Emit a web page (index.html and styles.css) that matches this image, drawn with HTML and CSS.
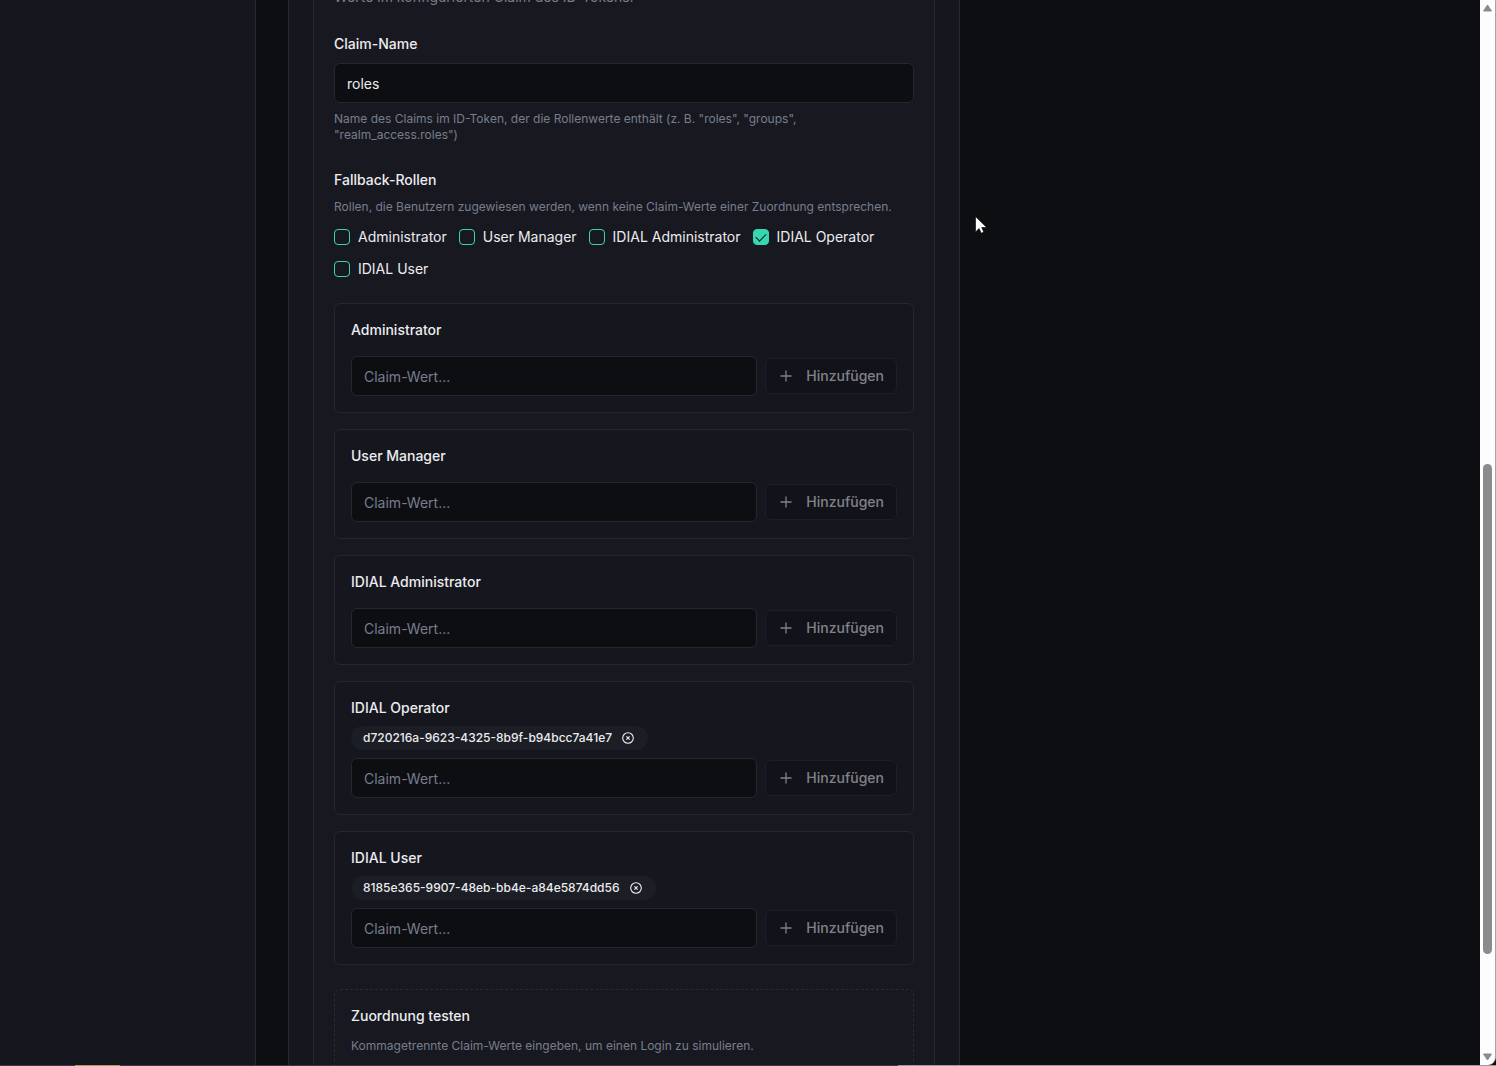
FILE: index.html
```html
<!DOCTYPE html>
<html lang="de">
<head>
<meta charset="UTF-8">
<meta name="viewport" content="width=device-width, initial-scale=1.0">
<title>Rollenzuordnung</title>
<link rel="stylesheet" href="styles.css">
</head>
<body>

<!-- shared icons -->
<svg class="sprite" aria-hidden="true">
<symbol id="plus" viewBox="0 0 16 16"><path d="M8 2.5v11M2.5 8h11" fill="none" stroke="currentColor" stroke-width="1.3"/></symbol>
<symbol id="remove" viewBox="0 0 12 12"><circle cx="6" cy="6" r="5.3" fill="none" stroke="currentColor" stroke-width="1.1"/><path d="M4.4 4.4l3.2 3.2M7.6 4.4L4.4 7.6" fill="none" stroke="currentColor" stroke-width="1.2"/></symbol>
</svg>

<div class="window">
<aside class="sidebar"></aside>

<main class="content">
<div class="card">
<section class="panel">
<p class="intro">Werte im konfigurierten Claim des ID-Tokens.</p>

<div class="field">
<label class="label" for="claimName">Claim-Name</label>
<input class="text-input" type="text" id="claimName" value="roles">
<p class="hint">Name des Claims im ID-Token, der die Rollenwerte enthält (z. B. "roles", "groups", "realm_access.roles")</p>
</div>

<fieldset class="fallback">
<legend class="label">Fallback-Rollen</legend>
<p class="hint">Rollen, die Benutzern zugewiesen werden, wenn keine Claim-Werte einer Zuordnung entsprechen.</p>
<div class="checks">
<label class="check"><input type="checkbox">Administrator</label>
<label class="check"><input type="checkbox">User Manager</label>
<label class="check"><input type="checkbox">IDIAL Administrator</label>
<label class="check"><input type="checkbox" checked>IDIAL Operator</label>
<label class="check"><input type="checkbox">IDIAL User</label>
</div>
</fieldset>

<div class="roles">
<div class="role">
<label class="role-title" for="roleAdmin">Administrator</label>
<div class="chips"></div>
<div class="add-row">
<input class="text-input" type="text" id="roleAdmin" placeholder="Claim-Wert...">
<button class="add" type="button" disabled><svg class="icon"><use href="#plus"/></svg>Hinzufügen</button>
</div>
</div>

<div class="role">
<label class="role-title" for="roleManager">User Manager</label>
<div class="chips"></div>
<div class="add-row">
<input class="text-input" type="text" id="roleManager" placeholder="Claim-Wert...">
<button class="add" type="button" disabled><svg class="icon"><use href="#plus"/></svg>Hinzufügen</button>
</div>
</div>

<div class="role">
<label class="role-title" for="roleIdialAdmin">IDIAL Administrator</label>
<div class="chips"></div>
<div class="add-row">
<input class="text-input" type="text" id="roleIdialAdmin" placeholder="Claim-Wert...">
<button class="add" type="button" disabled><svg class="icon"><use href="#plus"/></svg>Hinzufügen</button>
</div>
</div>

<div class="role">
<label class="role-title" for="roleOperator">IDIAL Operator</label>
<div class="chips">
<span class="chip">d720216a-9623-4325-8b9f-b94bcc7a41e7<button class="remove" type="button" aria-label="Entfernen"><svg><use href="#remove"/></svg></button></span>
</div>
<div class="add-row">
<input class="text-input" type="text" id="roleOperator" placeholder="Claim-Wert...">
<button class="add" type="button" disabled><svg class="icon"><use href="#plus"/></svg>Hinzufügen</button>
</div>
</div>

<div class="role">
<label class="role-title" for="roleUser">IDIAL User</label>
<div class="chips">
<span class="chip">8185e365-9907-48eb-bb4e-a84e5874dd56<button class="remove" type="button" aria-label="Entfernen"><svg><use href="#remove"/></svg></button></span>
</div>
<div class="add-row">
<input class="text-input" type="text" id="roleUser" placeholder="Claim-Wert...">
<button class="add" type="button" disabled><svg class="icon"><use href="#plus"/></svg>Hinzufügen</button>
</div>
</div>
</div>

<div class="test-box">
<h3 class="role-title">Zuordnung testen</h3>
<p class="hint">Kommagetrennte Claim-Werte eingeben, um einen Login zu simulieren.</p>
</div>
</section>
</div>
</main>

<div class="scrollbar" aria-hidden="true">
<svg class="arrow" viewBox="0 0 9 8"><path d="M4.5 1L8.5 7h-8z" fill="#8b8b8d" stroke="#8b8b8d" stroke-linejoin="round"/></svg>
<div class="track">
<div class="thumb"></div>
</div>
<svg class="arrow" viewBox="0 0 9 8"><path d="M4.5 7L.5 1h8z" fill="#8b8b8d" stroke="#8b8b8d" stroke-linejoin="round"/></svg>
</div>
</div>
<div class="edge"></div>

<svg class="pointer" viewBox="0 0 12 18" aria-hidden="true"><path d="M.5.5v15.4l3.6-3.4 2.1 4.7 2.6-1.1-2.1-4.6h5z" fill="#fff" stroke="#000" stroke-width=".6"/></svg>

</body>
</html>
```
FILE: styles.css
```css
* {
box-sizing: border-box;
}

body {
margin: 0;
height: 100vh;
display: flex;
flex-direction: column;
overflow: hidden;
background: #0d0e12;
color: #ececef;
font-family: Inter, "Noto Sans", sans-serif;
font-size: 14px;
line-height: 20px;
}

p, h3, fieldset {
margin: 0;
padding: 0;
border: 0;
}

.sprite {
display: none;
}

.window {
flex: 1;
min-height: 0;
display: flex;
}

/* window frame along the bottom */
.edge {
height: 1px;
background: linear-gradient(to right, #3c3a3c 5%, #a89a5c 5% 8%, #3c3a3c 8% 60%, #9a9a9c 60%);
}

.sidebar {
flex: 0 0 256px;
background: #16171e;
border-right: 1px solid #2a2b31;
}

.content {
flex: 1;
min-width: 0;
padding: 0 32px;
overflow: hidden;
}

/* the view is scrolled down, so the card starts above the window */
.card {
max-width: 672px;
margin-top: -38px;
padding: 0 24px;
background: #16171e;
border: 1px solid #2a2b31;
}

.panel {
padding: 24px 20px;
background: #181920;
border: 1px solid #24252b;
border-top: 0;
}

.intro {
color: #767e8d;
margin-bottom: 30px;
}

.field {
margin-bottom: 30px;
}

.label {
display: block;
margin-bottom: 12px;
padding: 0;
font-weight: 500;
line-height: 14px;
}

.text-input {
display: block;
width: 100%;
min-width: 0;
height: 40px;
padding: 0 12px;
background: #0d0e12;
border: 1px solid #26272d;
border-radius: 6px;
color: #ececef;
font: inherit;
}

.text-input::placeholder {
color: #767e8d;
opacity: 1;
}

.hint {
color: #767e8d;
font-size: 12px;
line-height: 16px;
}

.field .hint {
margin-top: 8px;
}

.checks {
display: flex;
flex-wrap: wrap;
gap: 12px;
margin-top: 12px;
}

.check {
display: flex;
align-items: center;
gap: 8px;
}

.check input {
appearance: none;
display: grid;
place-items: center;
width: 16px;
height: 16px;
margin: 0;
border: 1px solid #35d6b0;
border-radius: 4px;
}

.check input:checked {
background: #35d6b0;
}

.check input:checked::after {
content: "";
width: 9px;
height: 5px;
margin-bottom: 3px;
border: solid #16171e;
border-width: 0 0 1px 1px;
transform: rotate(-45deg);
}

.roles {
display: grid;
gap: 16px;
margin: 24px 0;
}

.role {
display: grid;
gap: 8px;
padding: 16px;
background: #16171e;
border: 1px solid #26272d;
border-radius: 6px;
}

.role-title {
font-size: 14px;
font-weight: 500;
line-height: 20px;
}

.chips {
display: flex;
flex-wrap: wrap;
gap: 8px;
}

.chip {
display: flex;
align-items: center;
gap: 10px;
height: 24px;
padding: 0 14px 0 12px;
background: #1c1e25;
border-radius: 12px;
font-size: 12px;
font-weight: 500;
}

.remove {
width: 12px;
height: 12px;
padding: 0;
background: none;
border: 0;
color: inherit;
cursor: pointer;
}

.remove svg {
display: block;
width: 12px;
height: 12px;
}

.add-row {
display: flex;
align-items: center;
gap: 8px;
}

.add-row .text-input {
flex: 1;
}

.add {
display: flex;
align-items: center;
gap: 12px;
height: 36px;
padding: 0 12px;
background: #12131a;
border: 1px solid #1e1f26;
border-radius: 6px;
color: #818287;
font: inherit;
font-weight: 500;
}

.icon {
width: 16px;
height: 16px;
}

.test-box {
padding: 16px;
border: 1px dashed #2a2b31;
border-radius: 6px;
}

.test-box .hint {
margin-top: 12px;
}

.scrollbar {
flex: 0 0 16px;
display: flex;
flex-direction: column;
align-items: center;
padding: 4px 0;
background: #fdfdfe;
border-right: 1px solid #a5a5a8;
border-bottom-right-radius: 8px;
}

.arrow {
width: 9px;
height: 8px;
}

.track {
flex: 1;
display: flex;
flex-direction: column;
width: 9px;
}

.track::before {
content: "";
flex: 452;
}

.thumb {
flex: 490;
border-radius: 5px;
background: #8b8b8d;
}

.track::after {
content: "";
flex: 99;
}

.pointer {
position: absolute;
left: 975px;
top: 216px;
width: 12px;
height: 18px;
}
```
